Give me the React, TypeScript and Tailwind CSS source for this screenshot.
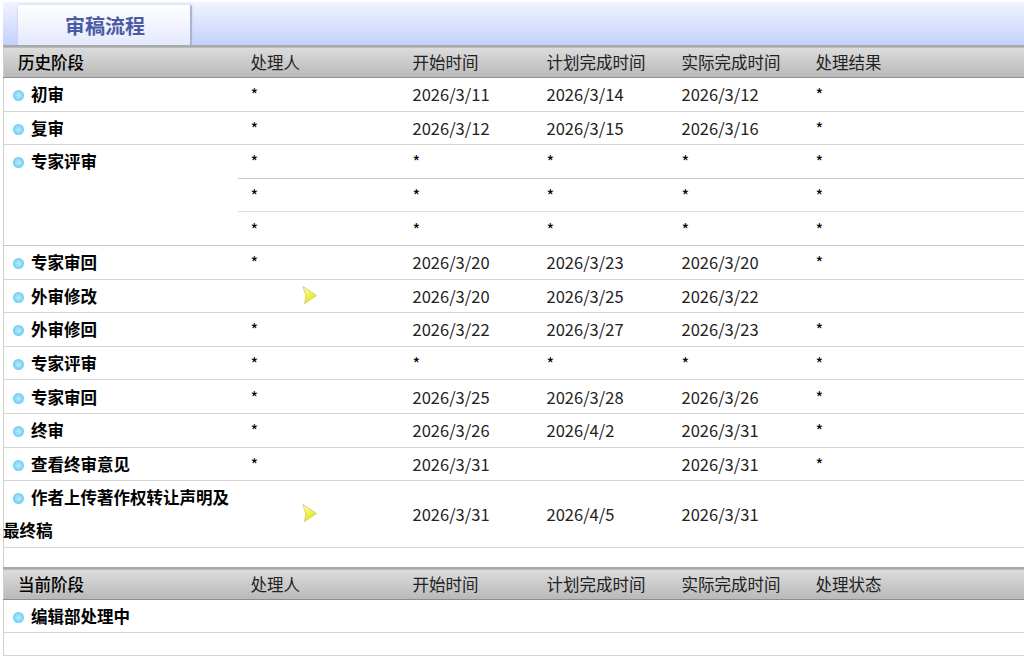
import React from "react";

interface Row {
  label: string;
  values?: string[];
  arrow?: boolean;
}

const history: Row[] = [
  { label: "初审", values: ["*", "2026/3/11", "2026/3/14", "2026/3/12", "*"] },
  { label: "复审", values: ["*", "2026/3/12", "2026/3/15", "2026/3/16", "*"] },
];

const historyAfter: Row[] = [
  { label: "专家审回", values: ["*", "2026/3/20", "2026/3/23", "2026/3/20", "*"] },
  { label: "外审修改", arrow: true, values: ["", "2026/3/20", "2026/3/25", "2026/3/22", ""] },
  { label: "外审修回", values: ["*", "2026/3/22", "2026/3/27", "2026/3/23", "*"] },
  { label: "专家评审", values: ["*", "*", "*", "*", "*"] },
  { label: "专家审回", values: ["*", "2026/3/25", "2026/3/28", "2026/3/26", "*"] },
  { label: "终审", values: ["*", "2026/3/26", "2026/4/2", "2026/3/31", "*"] },
  { label: "查看终审意见", values: ["*", "2026/3/31", "", "2026/3/31", "*"] },
];

const Bullet = () => (
  <span className="inline-block w-[11px] h-[11px] ml-[9px] mr-[7px] rounded-full align-[0px] bg-[radial-gradient(circle_at_50%_50%,#bdeefc_0%,#86daf8_45%,#56b6ee_100%)]" />
);

const Arrow = () => (
  <svg
    width="17"
    height="20"
    viewBox="0 0 17 20"
    className="absolute left-[63px] top-1/2 -translate-y-[55%]"
  >
    <defs>
      <linearGradient id="arrowFill" x1="0" y1="0" x2="0.5" y2="1">
        <stop offset="0" stopColor="#fdfdd0" />
        <stop offset="0.5" stopColor="#f2f55a" />
        <stop offset="1" stopColor="#d4e80c" />
      </linearGradient>
    </defs>
    <path
      d="M2 1.5 L15.5 10.5 L3.5 18.5 L5 11 Z"
      fill="url(#arrowFill)"
      stroke="#dccf6e"
      strokeWidth="1"
      strokeLinejoin="round"
    />
  </svg>
);

const HeaderRow = ({ title, last }: { title: string; last: string }) => (
  <tr className="h-[31.5px] text-[#222] bg-[linear-gradient(#dcdcdc,#b9b9b9)] border-t-2 border-t-[#a9a9a9] border-b border-b-[#8e8e8e]">
    <td className="pl-[14px] font-medium text-black">{title}</td>
    <td className="pl-[13px]">处理人</td>
    <td className="pl-[13px]">开始时间</td>
    <td className="pl-[13px]">计划完成时间</td>
    <td className="pl-[13px]">实际完成时间</td>
    <td className="pl-[13px]">{last}</td>
  </tr>
);

const Cell = ({ value, arrow }: { value: string; arrow?: boolean }) => (
  <td className={`pl-[13px] text-[#222] ${arrow ? "relative" : ""}`}>
    {arrow && <Arrow />}
    {value === "*" ? <span className="text-black">*</span> : value}
  </td>
);

const DataRow = ({ row }: { row: Row }) => (
  <tr className="h-[33.6px] border-b border-b-[#d4d4d4]">
    <td className="font-bold text-black">
      <Bullet />
      {row.label}
    </td>
    {(row.values ?? ["", "", "", "", ""]).map((v, i) => (
      <Cell key={i} value={v} arrow={row.arrow && i === 0} />
    ))}
  </tr>
);

export default function App() {
  return (
    <div className="w-[1024px] h-[658px] overflow-hidden bg-white pl-[3px] pt-[2px] font-['Noto_Sans_CJK_SC',sans-serif] text-[16.5px] leading-[24px]">
      <div className="h-[43px] pl-[15px] pt-[3px] bg-[linear-gradient(#f1f3ff,#c3d1fd)]">
        <div className="w-[174px] h-[40px] pl-[47px] pt-[5px] text-[20px] leading-[32px] font-bold text-[#4a5aa4] rounded-t-[2px] border-r-2 border-r-[#a9b4d6] shadow-[0_0_3px_#c4cbe4] bg-[linear-gradient(#ffffff,#e4e9fd)]">
          审稿流程
        </div>
      </div>
      <table className="w-[1021px] table-fixed border-collapse border-l border-l-[#cfcfcf]">
        <colgroup>
          <col className="w-[234px]" />
          <col className="w-[162px]" />
          <col className="w-[134px]" />
          <col className="w-[135px]" />
          <col className="w-[134px]" />
          <col />
        </colgroup>
        <tbody>
          <HeaderRow title="历史阶段" last="处理结果" />
          {history.map((row, i) => (
            <DataRow key={i} row={row} />
          ))}
          <tr className="h-[33.6px] border-b border-b-[#c8c8c8]">
            <td rowSpan={3} className="align-top pt-[4px] font-bold text-black border-b border-b-[#c8c8c8]">
              <Bullet />
              专家评审
            </td>
            {["*", "*", "*", "*", "*"].map((v, i) => (
              <Cell key={i} value={v} />
            ))}
          </tr>
          <tr className="h-[33.6px] border-b border-b-[#dedede]">
            {["*", "*", "*", "*", "*"].map((v, i) => (
              <Cell key={i} value={v} />
            ))}
          </tr>
          <tr className="h-[33.6px] border-b border-b-[#c8c8c8]">
            {["*", "*", "*", "*", "*"].map((v, i) => (
              <Cell key={i} value={v} />
            ))}
          </tr>
          {historyAfter.map((row, i) => (
            <DataRow key={i} row={row} />
          ))}
          <tr className="h-[66px] border-b border-b-[#d4d4d4]">
            <td className="font-bold text-black leading-[33px]">
              <div className="-ml-px">
                <span className="ml-px">
                  <Bullet />
                </span>
                作者上传著作权转让声明及最终稿
              </div>
            </td>
            <Cell value="" arrow />
            <Cell value="2026/3/31" />
            <Cell value="2026/4/5" />
            <Cell value="2026/3/31" />
            <Cell value="" />
          </tr>
          <tr className="h-[20px]">
            <td colSpan={6} />
          </tr>
          <HeaderRow title="当前阶段" last="处理状态" />
          <DataRow row={{ label: "编辑部处理中" }} />
          <tr className="h-[22.5px] border-b border-b-[#d4d4d4]">
            <td colSpan={6} />
          </tr>
        </tbody>
      </table>
    </div>
  );
}
